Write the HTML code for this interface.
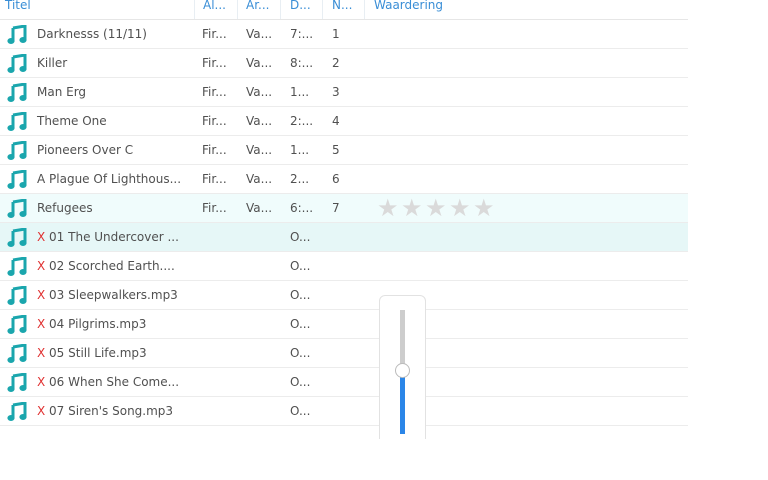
<!DOCTYPE html>
<html><head><style>
body{margin:0;width:768px;height:480px;background:#fff;font-family:"DejaVu Sans","Liberation Sans",sans-serif;font-size:12px;color:#505050;position:relative;overflow:hidden}
.hd{position:absolute;top:0;left:0;width:688px;height:19px;border-bottom:1px solid #e6e6e6;color:#3a8ed6}
.hd span{position:absolute;top:-1px;line-height:13px}
.hd i{position:absolute;top:0;height:19px;border-left:1px solid #e8eef3}
.r{position:absolute;left:0;width:688px;height:28px;border-bottom:1px solid #ececec}
.r span{position:absolute;top:7px;line-height:14px;white-space:nowrap}
.r svg{position:absolute;left:7px;top:5px}
.x{color:#e03030}
.pop{position:absolute;left:379px;top:295px;width:45px;height:150px;background:#fff;border:1px solid #e2e2e2;border-radius:6px}
</style></head><body>
<div class="hd"><span style="left:5px">Titel</span><i style="left:194px"></i><span style="left:203px">Al...</span><i style="left:237px"></i><span style="left:246px">Ar...</span><i style="left:280px"></i><span style="left:290px">D...</span><i style="left:322px"></i><span style="left:332px">N...</span><i style="left:364px"></i><span style="left:374px">Waardering</span></div>
<div id="rows"></div>
<script>
var d=[["Darknesss (11/11)","Fir...","Va...","7:...","1"],["Killer","Fir...","Va...","8:...","2"],["Man Erg","Fir...","Va...","1...","3"],["Theme One","Fir...","Va...","2:...","4"],["Pioneers Over C","Fir...","Va...","1...","5"],["A Plague Of Lighthous...","Fir...","Va...","2...","6"],["Refugees","Fir...","Va...","6:...","7"],["X 01 The Undercover ...","","","O...",""],["X 02 Scorched Earth....","","","O...",""],["X 03 Sleepwalkers.mp3","","","O...",""],["X 04 Pilgrims.mp3","","","O...",""],["X 05 Still Life.mp3","","","O...",""],["X 06 When She Come...","","","O...",""],["X 07 Siren's Song.mp3","","","O...",""]];
var ic='<svg width="20" height="20" viewBox="0 0 20 20"><path d="M6 3 L18 1 L18 15" stroke="#1aa6ad" stroke-width="3" fill="none"/><path d="M6 3 L6 16" stroke="#1aa6ad" stroke-width="3"/><ellipse cx="4" cy="16" rx="3.6" ry="3" fill="#1aa6ad"/><ellipse cx="16" cy="15" rx="3.6" ry="3" fill="#1aa6ad"/></svg>';
var h='';
d.forEach(function(r,i){
var bg=i==6?'#f0fcfc':i==7?'#e6f7f7':'#fff';
var t=r[0].charAt(0)=='X'&&r[0].charAt(1)==' '?'<b class="x" style="font-weight:normal">X</b> '+r[0].slice(2):r[0];
h+='<div class="r" style="top:'+(20+29*i)+'px;background:'+bg+'">'+ic+'<span style="left:37px">'+t+'</span><span style="left:202px">'+r[1]+'</span><span style="left:246px">'+r[2]+'</span><span style="left:290px">'+r[3]+'</span><span style="left:332px">'+r[4]+'</span>';
if(i==6){for(var k=0;k<5;k++)h+='<span style="left:'+(377+24*k)+'px;top:2px;font-size:24px;line-height:24px;color:#dadada">★</span>';}
h+='</div>';});
document.getElementById('rows').innerHTML=h;
</script>
<div class="pop">
<div style="position:absolute;left:20px;top:14px;width:5px;height:62px;background:#cdcdcd"></div>
<div style="position:absolute;left:20px;top:80px;width:5px;height:58px;background:#2b86e8"></div>
<div style="position:absolute;left:15px;top:67px;width:13px;height:13px;border:1px solid #bbb;border-radius:50%;background:#fff"></div>
</div>
<div style="position:absolute;left:370px;top:439px;width:70px;height:41px;background:#fff"></div>
</body></html>
